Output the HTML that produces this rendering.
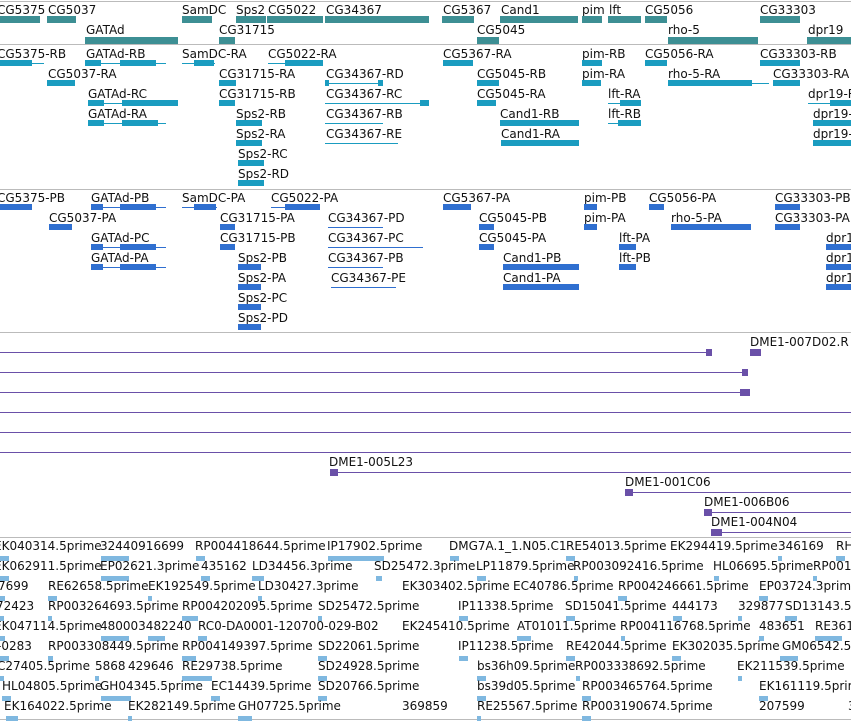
<!DOCTYPE html>
<html><head><meta charset="utf-8"><style>
body{margin:0;width:851px;height:721px;overflow:hidden;background:#fff;position:relative;font-family:"DejaVu Sans","Liberation Sans",sans-serif;}
div{position:absolute}
.t{font-size:12px;line-height:14px;color:#111;white-space:nowrap}
.s{height:1px;background:#bbb;left:0;width:851px}
.g1{height:7px;background:#3d8f94}
.g2{height:6px;background:#1a9cc0}
.g3{height:6px;background:#2f6fd0}
.l2{height:1px;background:#1a9cc0}
.l3{height:1px;background:#2f6fd0}
.p{height:1px;background:#6a50a8}
.pb{height:7px;background:#6a50a8}
.m{height:5px;width:9px;background:#7fb8e0}
</style></head><body>
<div class="s" style="top:1px"></div>
<div class="s" style="top:44px"></div>
<div class="s" style="top:189px"></div>
<div class="s" style="top:332px"></div>
<div class="s" style="top:537px"></div>
<div class="s" style="top:719px"></div>

<!-- track 1 -->
<div class="t" style="left:-3px;top:3px">CG5375</div><div class="g1" style="left:0;top:16px;width:40px"></div>
<div class="t" style="left:48px;top:3px">CG5037</div><div class="g1" style="left:47px;top:16px;width:29px"></div>
<div class="t" style="left:182px;top:3px">SamDC</div><div class="g1" style="left:182px;top:16px;width:30px"></div>
<div class="t" style="left:236px;top:3px">Sps2</div><div class="g1" style="left:236px;top:16px;width:30px"></div>
<div class="t" style="left:268px;top:3px">CG5022</div><div class="g1" style="left:267px;top:16px;width:56px"></div>
<div class="t" style="left:326px;top:3px">CG34367</div><div class="g1" style="left:325px;top:16px;width:104px"></div>
<div class="t" style="left:443px;top:3px">CG5367</div><div class="g1" style="left:442px;top:16px;width:32px"></div>
<div class="t" style="left:501px;top:3px">Cand1</div><div class="g1" style="left:500px;top:16px;width:78px"></div>
<div class="t" style="left:582px;top:3px">pim</div><div class="g1" style="left:582px;top:16px;width:20px"></div>
<div class="t" style="left:609px;top:3px">lft</div><div class="g1" style="left:608px;top:16px;width:33px"></div>
<div class="t" style="left:645px;top:3px">CG5056</div><div class="g1" style="left:645px;top:16px;width:22px"></div>
<div class="t" style="left:760px;top:3px">CG33303</div><div class="g1" style="left:760px;top:16px;width:40px"></div>
<div class="t" style="left:86px;top:23px">GATAd</div><div class="g1" style="left:85px;top:37px;width:93px"></div>
<div class="t" style="left:219px;top:23px">CG31715</div><div class="g1" style="left:219px;top:37px;width:16px"></div>
<div class="t" style="left:477px;top:23px">CG5045</div><div class="g1" style="left:477px;top:37px;width:22px"></div>
<div class="t" style="left:668px;top:23px">rho-5</div><div class="g1" style="left:668px;top:37px;width:90px"></div>
<div class="t" style="left:808px;top:23px">dpr19</div><div class="g1" style="left:807px;top:37px;width:44px"></div>

<!-- track 2 -->
<div class="t" style="left:-3px;top:47px">CG5375-RB</div><div class="l2" style="left:0;top:63px;width:44px"></div><div class="g2" style="left:0;top:60px;width:32px"></div>
<div class="t" style="left:86px;top:47px">GATAd-RB</div><div class="l2" style="left:85px;top:63px;width:81px"></div><div class="g2" style="left:85px;top:60px;width:16px"></div><div class="g2" style="left:120px;top:60px;width:36px"></div>
<div class="t" style="left:182px;top:47px">SamDC-RA</div><div class="l2" style="left:182px;top:63px;width:33px"></div><div class="g2" style="left:194px;top:60px;width:20px"></div>
<div class="t" style="left:268px;top:47px">CG5022-RA</div><div class="l2" style="left:268px;top:63px;width:55px"></div><div class="g2" style="left:285px;top:60px;width:38px"></div>
<div class="t" style="left:443px;top:47px">CG5367-RA</div><div class="g2" style="left:443px;top:60px;width:30px"></div>
<div class="t" style="left:582px;top:47px">pim-RB</div><div class="g2" style="left:582px;top:60px;width:20px"></div>
<div class="t" style="left:645px;top:47px">CG5056-RA</div><div class="g2" style="left:645px;top:60px;width:22px"></div>
<div class="t" style="left:760px;top:47px">CG33303-RB</div><div class="g2" style="left:760px;top:60px;width:40px"></div>
<div class="t" style="left:48px;top:67px">CG5037-RA</div><div class="g2" style="left:47px;top:80px;width:28px"></div>
<div class="t" style="left:219px;top:67px">CG31715-RA</div><div class="g2" style="left:219px;top:80px;width:17px"></div>
<div class="t" style="left:326px;top:67px">CG34367-RD</div><div class="l2" style="left:325px;top:83px;width:58px"></div><div class="g2" style="left:325px;top:80px;width:4px"></div><div class="g2" style="left:378px;top:80px;width:5px"></div>
<div class="t" style="left:477px;top:67px">CG5045-RB</div><div class="g2" style="left:477px;top:80px;width:22px"></div>
<div class="t" style="left:582px;top:67px">pim-RA</div><div class="g2" style="left:582px;top:80px;width:19px"></div>
<div class="t" style="left:668px;top:67px">rho-5-RA</div><div class="l2" style="left:668px;top:83px;width:101px"></div><div class="g2" style="left:668px;top:80px;width:84px"></div>
<div class="t" style="left:773px;top:67px">CG33303-RA</div><div class="g2" style="left:773px;top:80px;width:27px"></div>
<div class="t" style="left:88px;top:87px">GATAd-RC</div><div class="l2" style="left:88px;top:103px;width:90px"></div><div class="g2" style="left:88px;top:100px;width:16px"></div><div class="g2" style="left:122px;top:100px;width:56px"></div>
<div class="t" style="left:219px;top:87px">CG31715-RB</div><div class="g2" style="left:219px;top:100px;width:16px"></div>
<div class="t" style="left:326px;top:87px">CG34367-RC</div><div class="l2" style="left:325px;top:103px;width:104px"></div><div class="g2" style="left:420px;top:100px;width:9px"></div>
<div class="t" style="left:477px;top:87px">CG5045-RA</div><div class="g2" style="left:477px;top:100px;width:19px"></div>
<div class="t" style="left:608px;top:87px">lft-RA</div><div class="l2" style="left:608px;top:103px;width:33px"></div><div class="g2" style="left:620px;top:100px;width:21px"></div>
<div class="t" style="left:808px;top:87px">dpr19-RA</div><div class="l2" style="left:808px;top:103px;width:43px"></div><div class="g2" style="left:830px;top:100px;width:21px"></div>
<div class="t" style="left:88px;top:107px">GATAd-RA</div><div class="l2" style="left:88px;top:123px;width:78px"></div><div class="g2" style="left:88px;top:120px;width:16px"></div><div class="g2" style="left:122px;top:120px;width:36px"></div>
<div class="t" style="left:236px;top:107px">Sps2-RB</div><div class="g2" style="left:236px;top:120px;width:26px"></div>
<div class="t" style="left:326px;top:107px">CG34367-RB</div><div class="l2" style="left:325px;top:123px;width:58px"></div>
<div class="t" style="left:500px;top:107px">Cand1-RB</div><div class="g2" style="left:500px;top:120px;width:79px"></div>
<div class="t" style="left:608px;top:107px">lft-RB</div><div class="l2" style="left:608px;top:123px;width:33px"></div><div class="g2" style="left:618px;top:120px;width:23px"></div>
<div class="t" style="left:813px;top:107px">dpr19-RB</div><div class="g2" style="left:813px;top:120px;width:38px"></div>
<div class="t" style="left:236px;top:127px">Sps2-RA</div><div class="g2" style="left:236px;top:140px;width:26px"></div>
<div class="t" style="left:326px;top:127px">CG34367-RE</div><div class="l2" style="left:325px;top:143px;width:73px"></div>
<div class="t" style="left:501px;top:127px">Cand1-RA</div><div class="g2" style="left:501px;top:140px;width:78px"></div>
<div class="t" style="left:813px;top:127px">dpr19-RC</div><div class="g2" style="left:813px;top:140px;width:38px"></div>
<div class="t" style="left:238px;top:147px">Sps2-RC</div><div class="g2" style="left:238px;top:160px;width:26px"></div>
<div class="t" style="left:238px;top:167px">Sps2-RD</div><div class="g2" style="left:238px;top:180px;width:26px"></div>

<!-- track 3 -->
<div class="t" style="left:-3px;top:191px">CG5375-PB</div><div class="g3" style="left:0;top:204px;width:32px"></div>
<div class="t" style="left:91px;top:191px">GATAd-PB</div><div class="l3" style="left:91px;top:207px;width:75px"></div><div class="g3" style="left:91px;top:204px;width:12px"></div><div class="g3" style="left:120px;top:204px;width:36px"></div>
<div class="t" style="left:182px;top:191px">SamDC-PA</div><div class="l3" style="left:182px;top:207px;width:35px"></div><div class="g3" style="left:194px;top:204px;width:22px"></div>
<div class="t" style="left:271px;top:191px">CG5022-PA</div><div class="l3" style="left:271px;top:207px;width:49px"></div><div class="g3" style="left:285px;top:204px;width:35px"></div>
<div class="t" style="left:443px;top:191px">CG5367-PA</div><div class="g3" style="left:443px;top:204px;width:28px"></div>
<div class="t" style="left:584px;top:191px">pim-PB</div><div class="g3" style="left:584px;top:204px;width:13px"></div>
<div class="t" style="left:649px;top:191px">CG5056-PA</div><div class="g3" style="left:649px;top:204px;width:15px"></div>
<div class="t" style="left:775px;top:191px">CG33303-PB</div><div class="g3" style="left:775px;top:204px;width:25px"></div>
<div class="t" style="left:49px;top:211px">CG5037-PA</div><div class="g3" style="left:49px;top:224px;width:23px"></div>
<div class="t" style="left:220px;top:211px">CG31715-PA</div><div class="g3" style="left:220px;top:224px;width:15px"></div>
<div class="t" style="left:328px;top:211px">CG34367-PD</div><div class="l3" style="left:328px;top:227px;width:55px"></div>
<div class="t" style="left:479px;top:211px">CG5045-PB</div><div class="g3" style="left:479px;top:224px;width:15px"></div>
<div class="t" style="left:584px;top:211px">pim-PA</div><div class="g3" style="left:584px;top:224px;width:13px"></div>
<div class="t" style="left:671px;top:211px">rho-5-PA</div><div class="g3" style="left:671px;top:224px;width:80px"></div>
<div class="t" style="left:775px;top:211px">CG33303-PA</div><div class="g3" style="left:775px;top:224px;width:25px"></div>
<div class="t" style="left:91px;top:231px">GATAd-PC</div><div class="l3" style="left:91px;top:247px;width:75px"></div><div class="g3" style="left:91px;top:244px;width:12px"></div><div class="g3" style="left:120px;top:244px;width:36px"></div>
<div class="t" style="left:220px;top:231px">CG31715-PB</div><div class="g3" style="left:220px;top:244px;width:15px"></div>
<div class="t" style="left:328px;top:231px">CG34367-PC</div><div class="l3" style="left:328px;top:247px;width:95px"></div>
<div class="t" style="left:479px;top:231px">CG5045-PA</div><div class="g3" style="left:479px;top:244px;width:15px"></div>
<div class="t" style="left:619px;top:231px">lft-PA</div><div class="g3" style="left:619px;top:244px;width:17px"></div>
<div class="t" style="left:826px;top:231px">dpr19-PA</div><div class="g3" style="left:826px;top:244px;width:25px"></div>
<div class="t" style="left:91px;top:251px">GATAd-PA</div><div class="l3" style="left:91px;top:267px;width:75px"></div><div class="g3" style="left:91px;top:264px;width:12px"></div><div class="g3" style="left:120px;top:264px;width:36px"></div>
<div class="t" style="left:238px;top:251px">Sps2-PB</div><div class="g3" style="left:238px;top:264px;width:23px"></div>
<div class="t" style="left:328px;top:251px">CG34367-PB</div><div class="l3" style="left:328px;top:267px;width:55px"></div>
<div class="t" style="left:503px;top:251px">Cand1-PB</div><div class="g3" style="left:503px;top:264px;width:76px"></div>
<div class="t" style="left:619px;top:251px">lft-PB</div><div class="g3" style="left:619px;top:264px;width:17px"></div>
<div class="t" style="left:826px;top:251px">dpr19-PB</div><div class="g3" style="left:826px;top:264px;width:25px"></div>
<div class="t" style="left:238px;top:271px">Sps2-PA</div><div class="g3" style="left:238px;top:284px;width:23px"></div>
<div class="t" style="left:331px;top:271px">CG34367-PE</div><div class="l3" style="left:331px;top:287px;width:65px"></div>
<div class="t" style="left:503px;top:271px">Cand1-PA</div><div class="g3" style="left:503px;top:284px;width:76px"></div>
<div class="t" style="left:826px;top:271px">dpr19-PC</div><div class="g3" style="left:826px;top:284px;width:25px"></div>
<div class="t" style="left:238px;top:291px">Sps2-PC</div><div class="g3" style="left:238px;top:304px;width:23px"></div>
<div class="t" style="left:238px;top:311px">Sps2-PD</div><div class="g3" style="left:238px;top:324px;width:23px"></div>

<!-- track 4 -->
<div class="t" style="left:750px;top:335px">DME1-007D02.R</div>
<div class="p" style="left:0;top:352px;width:712px"></div><div class="pb" style="left:706px;top:349px;width:6px"></div><div class="pb" style="left:750px;top:349px;width:11px"></div>
<div class="p" style="left:0;top:372px;width:748px"></div><div class="pb" style="left:742px;top:369px;width:6px"></div>
<div class="p" style="left:0;top:392px;width:750px"></div><div class="pb" style="left:740px;top:389px;width:10px"></div>
<div class="p" style="left:0;top:412px;width:851px"></div>
<div class="p" style="left:0;top:432px;width:851px"></div>
<div class="p" style="left:0;top:452px;width:851px"></div>
<div class="t" style="left:329px;top:455px">DME1-005L23</div><div class="p" style="left:330px;top:472px;width:521px"></div><div class="pb" style="left:330px;top:469px;width:8px"></div>
<div class="t" style="left:625px;top:475px">DME1-001C06</div><div class="p" style="left:625px;top:492px;width:226px"></div><div class="pb" style="left:625px;top:489px;width:8px"></div>
<div class="t" style="left:704px;top:495px">DME1-006B06</div><div class="p" style="left:704px;top:512px;width:147px"></div><div class="pb" style="left:704px;top:509px;width:8px"></div>
<div class="t" style="left:711px;top:515px">DME1-004N04</div><div class="p" style="left:711px;top:532px;width:140px"></div><div class="pb" style="left:711px;top:529px;width:11px"></div>

<!-- track 5 -->
<div class="t" style="left:-6px;top:539px">EK040314.5prime</div><div class="m" style="left:0;top:556px"></div>
<div class="t" style="left:100px;top:539px">32440916699</div><div class="m" style="left:101px;top:556px;width:28px"></div>
<div class="t" style="left:195px;top:539px">RP004418644.5prime</div><div class="m" style="left:196px;top:556px"></div>
<div class="t" style="left:327px;top:539px">IP17902.5prime</div><div class="m" style="left:328px;top:556px;width:56px"></div>
<div class="t" style="left:449px;top:539px">DMG7A.1_1.N05.C1</div><div class="m" style="left:450px;top:556px"></div>
<div class="t" style="left:566px;top:539px">RE54013.5prime</div><div class="m" style="left:566px;top:556px"></div>
<div class="t" style="left:670px;top:539px">EK294419.5prime</div><div class="m" style="left:778px;top:556px;width:4px"></div>
<div class="t" style="left:778px;top:539px">346169</div>
<div class="t" style="left:836px;top:539px">RH</div><div class="m" style="left:836px;top:556px"></div>

<div class="t" style="left:-6px;top:559px">EK062911.5prime</div><div class="m" style="left:0;top:576px"></div>
<div class="t" style="left:100px;top:559px">EP02621.3prime</div><div class="m" style="left:101px;top:576px;width:28px"></div>
<div class="t" style="left:201px;top:559px">435162</div><div class="m" style="left:201px;top:576px"></div>
<div class="t" style="left:252px;top:559px">LD34456.3prime</div><div class="m" style="left:252px;top:576px;width:12px"></div>
<div class="t" style="left:374px;top:559px">SD25472.3prime</div><div class="m" style="left:376px;top:576px;width:6px"></div>
<div class="t" style="left:476px;top:559px">LP11879.5prime</div><div class="m" style="left:477px;top:576px"></div>
<div class="t" style="left:573px;top:559px">RP003092416.5prime</div><div class="m" style="left:574px;top:576px;width:4px"></div>
<div class="t" style="left:713px;top:559px">HL06695.5prime</div><div class="m" style="left:714px;top:576px;width:5px"></div>
<div class="t" style="left:813px;top:559px">RP001</div><div class="m" style="left:813px;top:576px;width:4px"></div>

<div class="t" style="left:-2px;top:579px">7699</div><div class="m" style="left:0;top:596px;width:5px"></div>
<div class="t" style="left:48px;top:579px">RE62658.5prime</div><div class="m" style="left:48px;top:596px"></div>
<div class="t" style="left:148px;top:579px">EK192549.5prime</div><div class="m" style="left:148px;top:596px;width:4px"></div>
<div class="t" style="left:258px;top:579px">LD30427.3prime</div><div class="m" style="left:258px;top:596px;width:4px"></div>
<div class="t" style="left:402px;top:579px">EK303402.5prime</div>
<div class="t" style="left:513px;top:579px">EC40786.5prime</div><div class="m" style="left:618px;top:596px"></div>
<div class="t" style="left:618px;top:579px">RP004246661.5prime</div>
<div class="t" style="left:759px;top:579px">EP03724.3prime</div><div class="m" style="left:759px;top:596px"></div>

<div class="t" style="left:-4px;top:599px">72423</div><div class="m" style="left:0;top:616px;width:4px"></div>
<div class="t" style="left:48px;top:599px">RP003264693.5prime</div><div class="m" style="left:48px;top:616px;width:4px"></div>
<div class="t" style="left:182px;top:599px">RP004202095.5prime</div><div class="m" style="left:182px;top:616px;width:16px"></div>
<div class="t" style="left:318px;top:599px">SD25472.5prime</div><div class="m" style="left:318px;top:616px;width:4px"></div>
<div class="t" style="left:458px;top:599px">IP11338.5prime</div><div class="m" style="left:459px;top:616px"></div>
<div class="t" style="left:565px;top:599px">SD15041.5prime</div><div class="m" style="left:566px;top:616px"></div>
<div class="t" style="left:672px;top:599px">444173</div><div class="m" style="left:673px;top:616px"></div>
<div class="t" style="left:738px;top:599px">329877</div><div class="m" style="left:738px;top:616px;width:4px"></div>
<div class="t" style="left:785px;top:599px">SD13143.5prime</div><div class="m" style="left:785px;top:616px;width:12px"></div>

<div class="t" style="left:-6px;top:619px">EK047114.5prime</div><div class="m" style="left:0;top:636px;width:5px"></div>
<div class="t" style="left:100px;top:619px">480003482240</div><div class="m" style="left:101px;top:636px;width:28px"></div><div class="m" style="left:148px;top:636px;width:17px"></div>
<div class="t" style="left:198px;top:619px">RC0-DA0001-120700-029-B02</div><div class="m" style="left:198px;top:636px"></div>
<div class="t" style="left:402px;top:619px">EK245410.5prime</div>
<div class="t" style="left:517px;top:619px">AT01011.5prime</div><div class="m" style="left:517px;top:636px;width:14px"></div>
<div class="t" style="left:620px;top:619px">RP004116768.5prime</div><div class="m" style="left:621px;top:636px;width:4px"></div>
<div class="t" style="left:759px;top:619px">483651</div><div class="m" style="left:759px;top:636px;width:5px"></div>
<div class="t" style="left:815px;top:619px">RE361</div><div class="m" style="left:815px;top:636px;width:27px"></div>

<div class="t" style="left:-3px;top:639px">-0283</div><div class="m" style="left:0;top:656px"></div>
<div class="t" style="left:48px;top:639px">RP003308449.5prime</div><div class="m" style="left:48px;top:656px;width:5px"></div>
<div class="t" style="left:182px;top:639px">RP004149397.5prime</div><div class="m" style="left:182px;top:656px;width:14px"></div>
<div class="t" style="left:318px;top:639px">SD22061.5prime</div><div class="m" style="left:318px;top:656px"></div>
<div class="t" style="left:458px;top:639px">IP11238.5prime</div><div class="m" style="left:459px;top:656px"></div>
<div class="t" style="left:566px;top:639px">RE42044.5prime</div><div class="m" style="left:566px;top:656px"></div>
<div class="t" style="left:672px;top:639px">EK302035.5prime</div><div class="m" style="left:672px;top:656px"></div>
<div class="t" style="left:782px;top:639px">GM06542.5prime</div><div class="m" style="left:780px;top:656px;width:18px"></div>

<div class="t" style="left:-3px;top:659px">C27405.5prime</div><div class="m" style="left:0;top:676px;width:4px"></div>
<div class="t" style="left:95px;top:659px">5868</div><div class="m" style="left:95px;top:676px;width:4px"></div>
<div class="t" style="left:128px;top:659px">429646</div>
<div class="t" style="left:182px;top:659px">RE29738.5prime</div><div class="m" style="left:182px;top:676px;width:30px"></div>
<div class="t" style="left:318px;top:659px">SD24928.5prime</div><div class="m" style="left:318px;top:676px"></div>
<div class="t" style="left:477px;top:659px">bs36h09.5prime</div><div class="m" style="left:477px;top:676px"></div>
<div class="t" style="left:575px;top:659px">RP003338692.5prime</div><div class="m" style="left:576px;top:676px;width:4px"></div>
<div class="t" style="left:737px;top:659px">EK211539.5prime</div><div class="m" style="left:738px;top:676px;width:4px"></div>

<div class="t" style="left:2px;top:679px">HL04805.5prime</div><div class="m" style="left:2px;top:696px"></div>
<div class="t" style="left:100px;top:679px">GH04345.5prime</div><div class="m" style="left:101px;top:696px;width:30px"></div>
<div class="t" style="left:211px;top:679px">EC14439.5prime</div><div class="m" style="left:211px;top:696px"></div>
<div class="t" style="left:318px;top:679px">SD20766.5prime</div><div class="m" style="left:318px;top:696px"></div>
<div class="t" style="left:477px;top:679px">bs39d05.5prime</div><div class="m" style="left:477px;top:696px"></div>
<div class="t" style="left:582px;top:679px">RP003465764.5prime</div><div class="m" style="left:582px;top:696px"></div>
<div class="t" style="left:759px;top:679px">EK161119.5prime</div><div class="m" style="left:759px;top:696px"></div>

<div class="t" style="left:4px;top:699px">EK164022.5prime</div><div class="m" style="left:6px;top:716px;width:12px"></div>
<div class="t" style="left:128px;top:699px">EK282149.5prime</div><div class="m" style="left:128px;top:716px;width:4px"></div>
<div class="t" style="left:238px;top:699px">GH07725.5prime</div><div class="m" style="left:238px;top:716px;width:14px"></div>
<div class="t" style="left:402px;top:699px">369859</div>
<div class="t" style="left:477px;top:699px">RE25567.5prime</div><div class="m" style="left:477px;top:716px;width:4px"></div>
<div class="t" style="left:582px;top:699px">RP003190674.5prime</div><div class="m" style="left:582px;top:716px"></div>
<div class="t" style="left:759px;top:699px">207599</div>
<div class="t" style="left:848px;top:699px">3</div>
</body></html>
